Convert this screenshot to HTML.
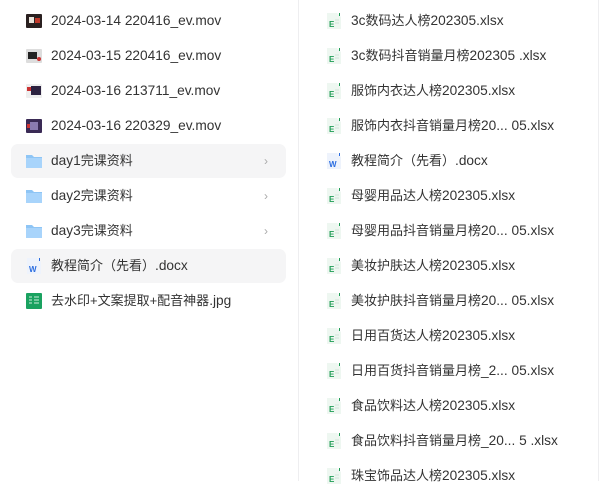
<!DOCTYPE html><html><head><meta charset="utf-8"><style>
body{margin:0;width:607px;height:481px;background:#fff;overflow:hidden;position:relative;font-family:"Liberation Sans","Noto Sans CJK SC",sans-serif;font-size:13px;color:#333}
.r{position:absolute;height:34px;line-height:34px;white-space:nowrap}
.hl{background:#f5f5f6;border-radius:7px}
.t{position:absolute;top:0}
.lat{font-size:13.7px}
.ic{position:absolute;top:9px;width:16px;height:16px}
.vl{position:absolute;top:0;width:1px;height:481px;background:#eeeef0}
.ch{position:absolute;right:18px;top:0;color:#aaa;font-size:12px}
</style></head><body>
<div class="vl" style="left:298px"></div><div class="vl" style="left:598px"></div>
<div class="r" style="left:11px;top:4px;width:275px"><svg class="ic" style="left:15px" viewBox="0 0 16 16"><rect x="0" y="1" width="16" height="14" rx="1" fill="#2a2020"/><rect x="3" y="4" width="5" height="6" fill="#e9e3da"/><rect x="9" y="5" width="5" height="5" fill="#c0392b"/></svg><span class="t lat" style="left:40px">2024-03-14 220416_ev.mov</span></div>
<div class="r" style="left:11px;top:39px;width:275px"><svg class="ic" style="left:15px" viewBox="0 0 16 16"><rect x="0" y="1" width="16" height="14" rx="1" fill="#ddd"/><rect x="2" y="4" width="9" height="7" fill="#222"/><circle cx="13" cy="11" r="2" fill="#c33"/></svg><span class="t lat" style="left:40px">2024-03-15 220416_ev.mov</span></div>
<div class="r" style="left:11px;top:74px;width:275px"><svg class="ic" style="left:15px" viewBox="0 0 16 16"><rect x="0" y="1" width="16" height="14" rx="1" fill="#eee"/><rect x="5" y="3" width="10" height="9" fill="#2c2240"/><rect x="1" y="4" width="4" height="4" fill="#c33"/></svg><span class="t lat" style="left:40px">2024-03-16 213711_ev.mov</span></div>
<div class="r" style="left:11px;top:109px;width:275px"><svg class="ic" style="left:15px" viewBox="0 0 16 16"><rect x="0" y="1" width="16" height="14" rx="1" fill="#3a2a55"/><rect x="4" y="4" width="8" height="8" fill="#8a7ab0"/><rect x="1" y="6" width="3" height="4" fill="#c33"/></svg><span class="t lat" style="left:40px">2024-03-16 220329_ev.mov</span></div>
<div class="r hl" style="left:11px;top:144px;width:275px"><svg class="ic" style="left:15px" viewBox="0 0 16 16"><path d="M0 2h6l2 2h8v11H0z" fill="#8ec5f5"/><path d="M0 5h16v10H0z" fill="#a8d4fb"/></svg><span class="t" style="left:40px"><span class="lat">day1</span>完课资料</span><span class="ch">›</span></div>
<div class="r" style="left:11px;top:179px;width:275px"><svg class="ic" style="left:15px" viewBox="0 0 16 16"><path d="M0 2h6l2 2h8v11H0z" fill="#8ec5f5"/><path d="M0 5h16v10H0z" fill="#a8d4fb"/></svg><span class="t" style="left:40px"><span class="lat">day2</span>完课资料</span><span class="ch">›</span></div>
<div class="r" style="left:11px;top:214px;width:275px"><svg class="ic" style="left:15px" viewBox="0 0 16 16"><path d="M0 2h6l2 2h8v11H0z" fill="#8ec5f5"/><path d="M0 5h16v10H0z" fill="#a8d4fb"/></svg><span class="t" style="left:40px"><span class="lat">day3</span>完课资料</span><span class="ch">›</span></div>
<div class="r hl" style="left:11px;top:249px;width:275px"><svg class="ic" style="left:15px" viewBox="0 0 16 16"><path d="M1 0h10l4 4v12H1z" fill="#eef3fc"/><text x="3" y="14" font-size="8" font-weight="bold" fill="#2b6de0" font-family="Liberation Sans">W</text><rect x="13" y="0" width="1" height="3" fill="#2b6de0"/></svg><span class="t" style="left:40px">教程简介（先看）<span class="lat">.docx</span></span></div>
<div class="r" style="left:11px;top:284px;width:275px"><svg class="ic" style="left:15px" viewBox="0 0 16 16"><rect x="0" y="0" width="16" height="16" rx="1" fill="#1aa260"/><path d="M3 4h3M8 4h5M3 7h3M8 7h5M3 10h3M8 10h5" stroke="#cfeedd" stroke-width="1"/></svg><span class="t" style="left:40px">去水印+文案提取+配音神器<span class="lat">.jpg</span></span></div>
<div id="R"></div>
<script>
var n=["3c数码达人榜202305.xlsx","3c数码抖音销量月榜202305 .xlsx","服饰内衣达人榜202305.xlsx","服饰内衣抖音销量月榜20... 05.xlsx","教程简介（先看）.docx","母婴用品达人榜202305.xlsx","母婴用品抖音销量月榜20... 05.xlsx","美妆护肤达人榜202305.xlsx","美妆护肤抖音销量月榜20... 05.xlsx","日用百货达人榜202305.xlsx","日用百货抖音销量月榜_2... 05.xlsx","食品饮料达人榜202305.xlsx","食品饮料抖音销量月榜_20... 5 .xlsx","珠宝饰品达人榜202305.xlsx"];
function wrap(s){return s.replace(/([\x20-\x7e]+)/g,'<span class="lat">$1</span>');}
var h="";n.forEach(function(s,i){var w=s.indexOf("docx")>0;h+='<div class="r" style="left:311px;top:'+(4+i*35)+'px;width:280px"><svg class="ic" style="left:15px" viewBox="0 0 16 16"><path d="M1 0h10l4 4v12H1z" fill="'+(w?'#eef3fc':'#eef7f1')+'"/>'+(w?'<text x="3" y="14" font-size="8" font-weight="bold" fill="#2b6de0" font-family="Liberation Sans">W</text><rect x="13" y="0" width="1" height="3" fill="#2b6de0"/>':'<text x="3" y="14" font-size="8" font-weight="bold" fill="#1f9d55" font-family="Liberation Sans">E</text><rect x="13" y="0" width="1" height="3" fill="#1f9d55"/><path d="M9 7h4M9 10h4" stroke="#cde6d6"/>')+'</svg><span class="t" style="left:40px">'+wrap(s)+'</span></div>'});
document.getElementById("R").innerHTML=h;
</script>
</body></html>
